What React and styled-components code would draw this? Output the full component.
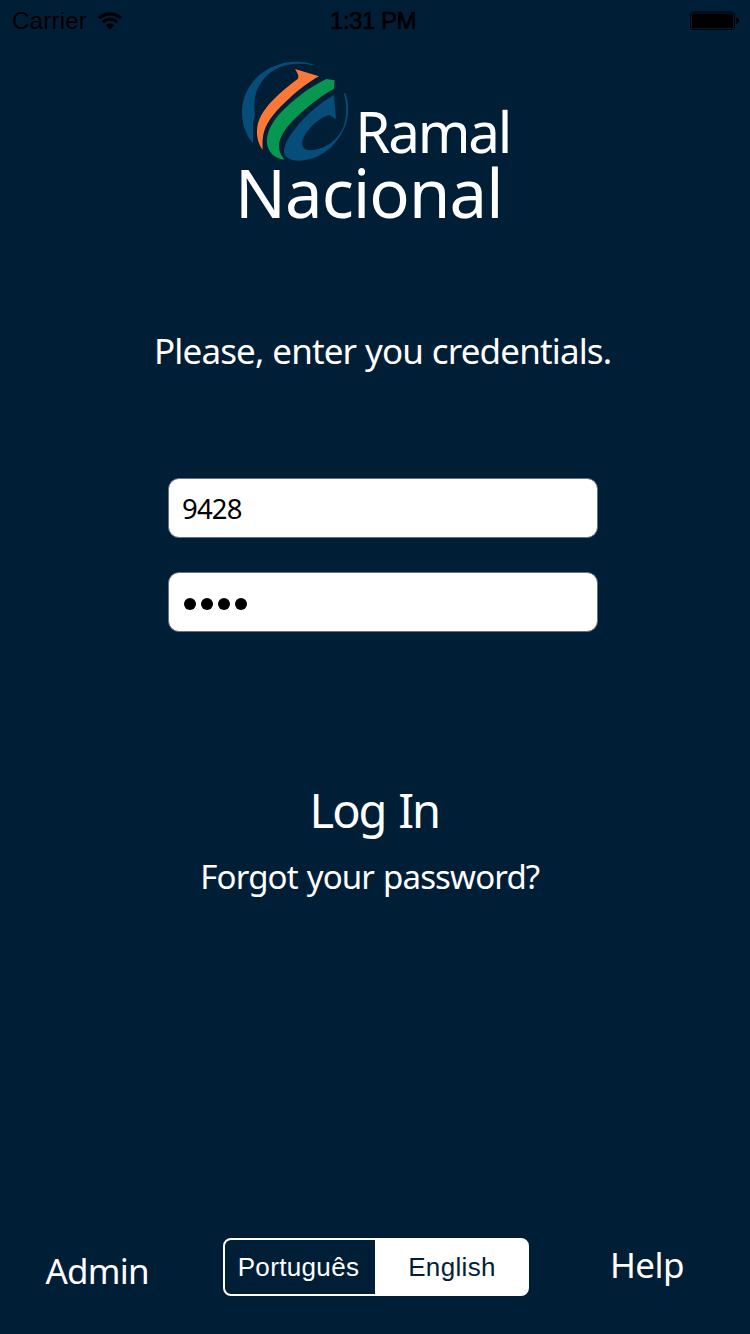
import React, { useState } from "react";
import styled, { createGlobalStyle } from "styled-components";

const NAVY = "#011e37";

const GlobalStyle = createGlobalStyle`
  *, *::before, *::after { box-sizing: border-box; }
  body { margin: 0; background: ${NAVY}; }
  button, input { margin: 0; padding: 0; border: 0; background: none; font: inherit; color: inherit; outline: none; }
`;

const Screen = styled.main`
  width: 750px;
  height: 1334px;
  display: flex;
  flex-direction: column;
  align-items: flex-start;
  overflow: hidden;
  background: ${NAVY};
  color: #fff;
  font-family: "Noto Sans", "Open Sans", sans-serif;
`;

const StatusBar = styled.header`
  width: 100%;
  height: 50px;
  padding: 1px 11px 9px 12px;
  display: grid;
  grid-template-columns: 1fr auto 1fr;
  align-items: center;
  color: #000;
  font: 24px/40px "Liberation Sans", Arial, sans-serif;
`;

const Carrier = styled.div`
  display: flex;
  align-items: center;
  gap: 11px;
  letter-spacing: 0.25px;
`;

const Clock = styled.div`
  margin-right: 5px;
  -webkit-text-stroke: 0.7px #000;
  letter-spacing: -0.5px;
`;

const Battery = styled.svg`
  justify-self: end;
`;

const Brand = styled.div`
  height: 115px;
  margin-left: 230px;
  display: flex;
  align-items: flex-start;
`;

const Text = styled.div`
  margin-left: ${(p) => p.$left || 0}px;
  margin-top: ${(p) => p.$top || 0}px;
  flex: none;
  font-size: ${(p) => p.$size}px;
  line-height: ${(p) => p.$line}px;
  letter-spacing: ${(p) => p.$track || 0}px;
  word-spacing: ${(p) => p.$word || 0}px;
  white-space: pre;
`;

const Form = styled.form`
  margin: 102px 0 0 168px;
  display: flex;
  flex-direction: column;
  gap: 34px;
`;

const Field = styled.input`
  width: 430px;
  height: 60px;
  padding: 0 13px;
  border: 1px solid #64717f;
  border-radius: 11px;
  background: #fff;
  color: #000;
  font-size: 27.5px;
  letter-spacing: -0.8px;
`;

const Secret = styled.div`
  width: 430px;
  height: 60px;
  padding: 4px 15px 0;
  display: flex;
  align-items: center;
  gap: 5px;
  border: 1px solid #64717f;
  border-radius: 11px;
  background: #fff;
`;

const Dot = styled.i`
  width: 12px;
  height: 12px;
  border-radius: 50%;
  background: #000;
`;

const Footer = styled.footer`
  width: 100%;
  margin-top: auto;
  height: 96px;
  display: flex;
  align-items: flex-start;
`;

const FooterSlot = styled.div`
  width: 223px;
  flex: none;
`;

const Segments = styled.div`
  width: 306px;
  height: 58px;
  display: flex;
  flex: none;
`;

const Segment = styled.button`
  width: 153px;
  flex: none;
  background: ${(p) => (p.$active ? "#fff" : "transparent")};
  color: ${(p) => (p.$active ? NAVY : "#fff")};
  font: 26px/54px "Liberation Sans", Arial, sans-serif;
  letter-spacing: 0.35px;

  &&:first-child {
    border: 2px solid #fff;
    border-right-width: 1px;
    border-radius: 8px 0 0 8px;
    padding-right: 3px;
  }
  &&:last-child {
    border: 2px solid #fff;
    border-left-width: 1px;
    border-radius: 0 8px 8px 0;
  }
`;

const Globe = () => (
  <svg width="120" height="115" viewBox="0 0 360 345" style={{ flex: "none" }}>
    <g fill="#064d79">
      <path d="M252 44C225 34 178 31 145 44C83 62 37 119 36 185C36 224 49 258 69 279V218C71 209 75 203 75 193C71 170 72 139 84 114C99 83 126 57 163 47C190 40 221 40 252 46Z" />
      <path d="M312 135L318 207C308 203 305 197 298 195C274 201 244 224 225 254C213 275 213 293 230 299C250 304 279 295 304 278C338 254 352 213 348 163C347 150 344 139 342 129H346C356 156 357 187 350 213C337 264 296 309 248 325C217 335 183 335 168 320C153 303 169 270 193 239C221 203 266 160 312 135Z" />
    </g>
    <path fill="#fa7938" d="M195 57L267 79C242 92 209 117 179 144C139 180 112 212 102 245C97 263 97 281 98 299C86 285 80 263 81 241C82 209 99 180 130 149C154 125 182 103 203 87C209 79 201 67 195 57Z" />
    <path fill="#079751" d="M289 87L314 91L312 116C272 137 223 177 187 214C163 239 147 265 147 288C147 303 153 317 163 329C133 325 115 306 111 281C108 248 128 209 166 174C202 139 251 105 289 87Z" />
  </svg>
);

const Wifi = () => (
  <svg width="24" height="19" viewBox="0 0 24 19" fill="none" stroke="#000">
    <path d="M1.1 6.1C7.2.4 16.8.4 22.9 6.1" strokeWidth="3.2" />
    <path d="M4.8 10.1C8.9 6.3 15.1 6.3 19.2 10.1" strokeWidth="3" />
    <path d="M7.7 13.2C10.2 11 13.8 11 16.3 13.2L12 17.8Z" fill="#000" stroke="none" />
  </svg>
);

export default function App() {
  const [user, setUser] = useState("9428");
  const [lang, setLang] = useState("English");
  return (
    <>
      <GlobalStyle />
      <Screen>
        <StatusBar>
          <Carrier>
            Carrier
            <Wifi />
          </Carrier>
          <Clock>1:31 PM</Clock>
          <Battery width="50" height="20" viewBox="0 0 50 20">
            <rect x="1.5" y="1" width="44" height="17.5" rx="3" fill="none" stroke="#000" />
            <rect x="3" y="2.5" width="41" height="14.5" rx="1.5" />
            <path d="M47 6.5Q50 7 50 9.75T47 13Z" />
          </Battery>
        </StatusBar>
        <Brand>
          <Globe />
          <Text $size={56.5} $line={50} $left={5.3} $top={57} $track={-2.2}>Ramal</Text>
        </Brand>
        <Text $size={67} $line={54} $left={235} $top={0} $track={-0.9}>Nacional</Text>
        <Text $size={35} $line={50} $left={154} $top={107} $track={-0.85} $word={0.5}>Please, enter you credentials.</Text>
        <Form>
          <Field value={user} onChange={(e) => setUser(e.target.value)} />
          <Secret>
            <Dot /><Dot /><Dot /><Dot />
          </Secret>
        </Form>
        <Text as="button" $size={47} $line={60} $left={309.5} $top={148} $track={-2} $word={2.5}>Log In</Text>
        <Text as="button" $size={33} $line={50} $left={200.3} $top={12} $track={-0.85} $word={1.2}>Forgot your password?</Text>
        <Footer>
          <FooterSlot>
            <Text as="button" $size={35} $line={50} $left={45.5} $top={8} $track={-0.8}>Admin</Text>
          </FooterSlot>
          <Segments>
            {["Português", "English"].map((l) => (
              <Segment key={l} $active={l === lang} onClick={() => setLang(l)}>{l}</Segment>
            ))}
          </Segments>
          <Text as="button" $size={35} $line={50} $left={81} $top={2} $track={-0.6}>Help</Text>
        </Footer>
      </Screen>
    </>
  );
}
